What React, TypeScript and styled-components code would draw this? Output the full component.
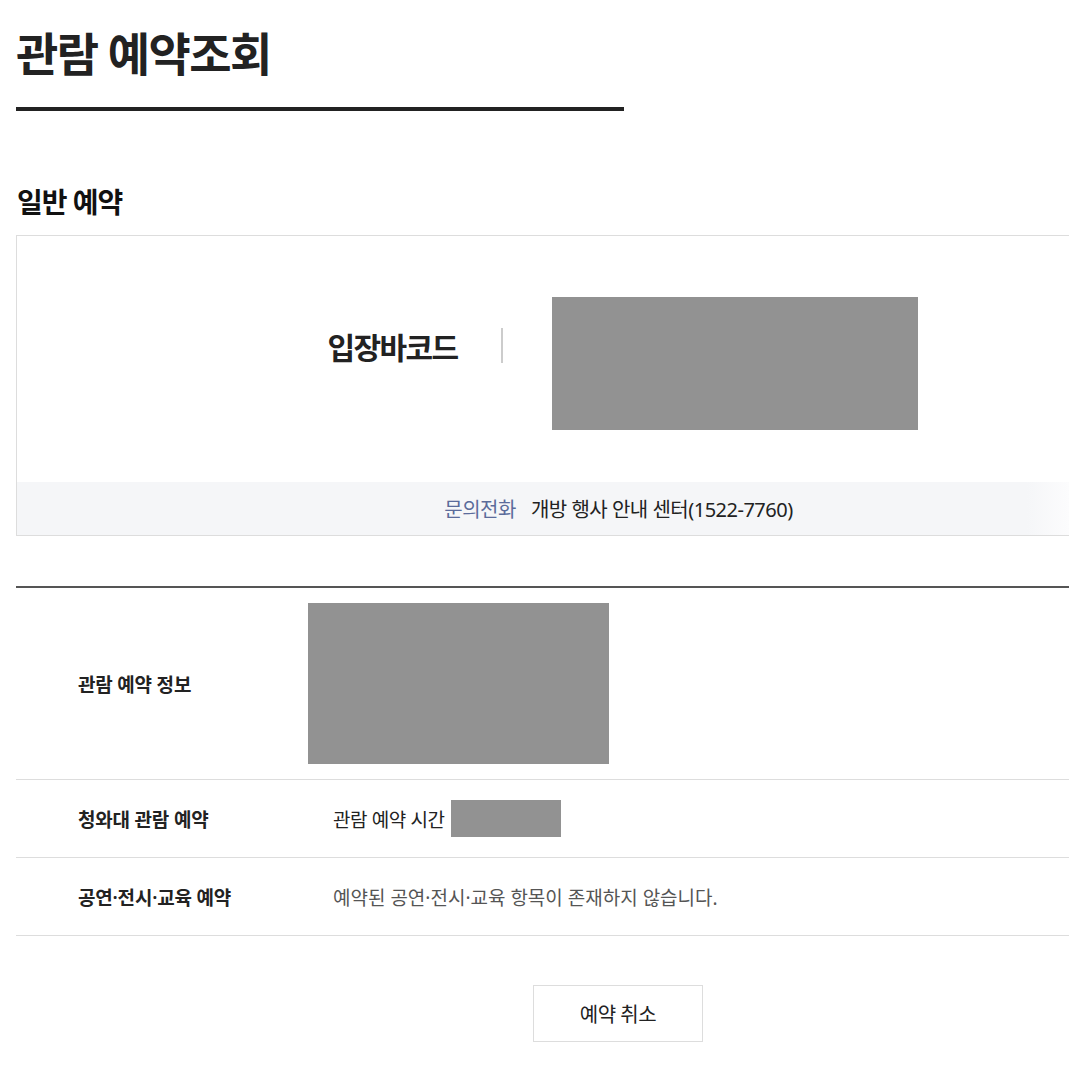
import React from 'react';
import styled, {createGlobalStyle} from 'styled-components';

const GlobalStyle = createGlobalStyle`
  html, body {
    margin: 0;
    padding: 0;
    background: #fff;
    overflow-x: hidden;
  }
  body {
    font-family: 'Noto Sans', 'Noto Sans CJK KR', sans-serif;
    color: #222;
    -webkit-font-smoothing: antialiased;
  }
`;

const rows = [
  {label: '관람 예약 정보', kind: 'image'},
  {label: '청와대 관람 예약', kind: 'time'},
  {label: '공연·전시·교육 예약', kind: 'empty'},
];

const App: React.FC = () => {
  return (
    <>
      <GlobalStyle/>
      <Page>
        <Title>관람 예약조회</Title>
        <TitleBar/>
        <SectionTitle>일반 예약</SectionTitle>
        <Card>
          <BarcodeRow>
            <BarcodeLabel>
              입장바코드
              <Divider/>
            </BarcodeLabel>
            <Blank $w={366} $h={133}/>
          </BarcodeRow>
          <CardFooter>
            <FooterKey>문의전화</FooterKey>
            <span>개방 행사 안내 센터(1522-7760)</span>
          </CardFooter>
        </Card>
        <InfoTable>
          {rows.map(r => (
            <InfoRow key={r.label} $tall={r.kind === 'image'}>
              <InfoLabel>{r.label}</InfoLabel>
              {r.kind === 'image' && (
                <InfoValue>
                  <Blank $w={301} $h={161}/>
                </InfoValue>
              )}
              {r.kind === 'time' && (
                <InfoValue $indent>
                  관람 예약 시간
                  <Blank $w={110} $h={37}/>
                </InfoValue>
              )}
              {r.kind === 'empty' && (
                <InfoValue $indent $muted>
                  예약된 공연·전시·교육 항목이 존재하지 않습니다.
                </InfoValue>
              )}
            </InfoRow>
          ))}
        </InfoTable>
        <Actions>
          <CancelButton type="button">예약 취소</CancelButton>
        </Actions>
      </Page>
    </>
  );
}

const Page = styled.div`
  width: 1204px;
  padding: 0 0 40px 16px;
`

const Title = styled.h1`
  margin: 0;
  padding-top: 25px;
  font-size: 46px;
  line-height: 56px;
  font-weight: 700;
  letter-spacing: -1.6px;
  color: #222;
`

const TitleBar = styled.div`
  width: 608px;
  height: 4px;
  margin-top: 26px;
  background: #222;
`

const SectionTitle = styled.h2`
  margin: 73px 0 15px 1px;
  font-size: 28px;
  line-height: 36px;
  font-weight: 600;
  letter-spacing: -1px;
  color: #111;
`

const Card = styled.div`
  border: 1px solid #ddd;
  border-right: none;
`

const BarcodeRow = styled.div`
  display: flex;
  justify-content: center;
  align-items: flex-start;
  height: 246px;
  padding: 61px 0 0 8px;
  box-sizing: border-box;
`

const BarcodeLabel = styled.div`
  display: flex;
  align-items: center;
  height: 35px;
  margin-top: 31px;
  font-size: 30px;
  font-weight: 700;
  letter-spacing: -1.6px;
  color: #222;
`

const Divider = styled.span`
  width: 2px;
  height: 35px;
  margin: 0 49px 0 43px;
  background: #ccc;
`

const Blank = styled.div<{$w: number; $h: number}>`
  flex: none;
  width: ${p => p.$w}px;
  height: ${p => p.$h}px;
  background: #929292;
`

const CardFooter = styled.div`
  display: flex;
  justify-content: center;
  align-items: center;
  gap: 15px;
  height: 53px;
  background: linear-gradient(to right, #f5f6f8 0, #f5f6f8 1010px, #fcfcfd 1052px);
  font-size: 20px;
  letter-spacing: -0.5px;
  color: #222;
`

const FooterKey = styled.span`
  color: #5b6b9b;
`

const InfoTable = styled.div`
  margin-top: 50px;
  border-top: 2px solid #555;
`

const InfoRow = styled.div<{$tall?: boolean}>`
  display: grid;
  grid-template-columns: 292px 1fr;
  align-items: center;
  min-height: ${p => (p.$tall ? 192 : 78)}px;
  padding: ${p => (p.$tall ? '15px 0' : '0')};
  box-sizing: border-box;
  border-bottom: 1px solid #ddd;
`

const InfoLabel = styled.div`
  padding-left: 62px;
  font-size: 19px;
  font-weight: 600;
  letter-spacing: -0.2px;
  color: #222;
`

const InfoValue = styled.div<{$indent?: boolean; $muted?: boolean}>`
  display: flex;
  align-items: center;
  gap: 6px;
  padding-left: ${p => (p.$indent ? 25 : 0)}px;
  font-size: 19px;
  letter-spacing: ${p => (p.$muted ? 0 : -0.4)}px;
  color: ${p => (p.$muted ? '#555' : '#222')};
`

const Actions = styled.div`
  display: flex;
  justify-content: center;
  margin-top: 49px;
`

const CancelButton = styled.button`
  width: 170px;
  height: 57px;
  background: #fff;
  border: 1px solid #ddd;
  font-family: inherit;
  font-size: 20px;
  letter-spacing: -0.5px;
  color: #222;
  cursor: pointer;
`

export default App;
